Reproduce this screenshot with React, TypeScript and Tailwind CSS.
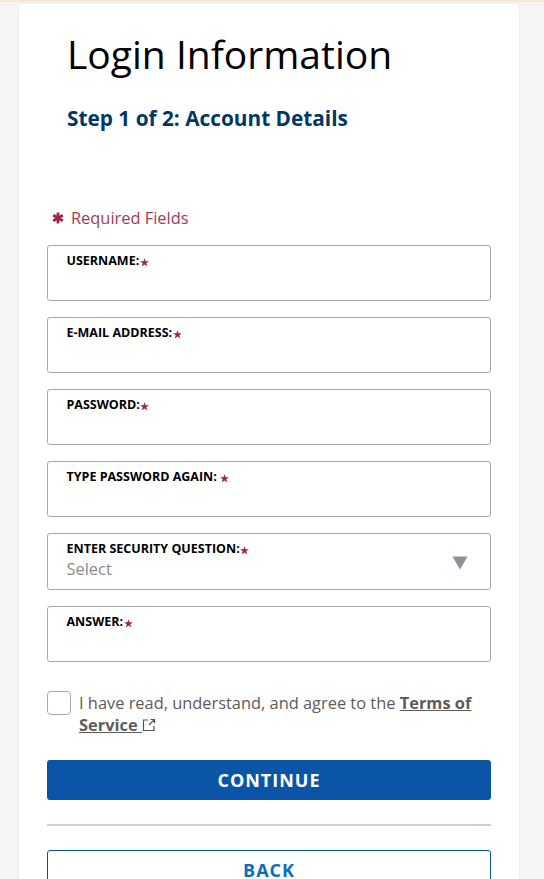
import React from "react";

const Star = ({ className = "" }: { className?: string }) => (
    <svg viewBox="0 0 10 10" className={`inline-block w-[9px] h-[9px] ${className}`}>
        <path d="M5 0.3 L6.2 3.6 L9.8 3.6 L7 5.8 L8 9.4 L5 7.3 L2 9.4 L3 5.8 L0.2 3.6 L3.8 3.6 Z" fill="#a3244a" />
    </svg>
);

const Field = ({ label, gap = false }: { label: string; gap?: boolean }) => (
    <div className="h-14 border border-[#a9a9a9] rounded-[3px] bg-white pl-[18.5px] pt-[7px]">
        <div className="flex items-center text-[12.5px] leading-[16px] font-bold text-black">
            <span>{label}</span>
            <Star className={gap ? "ml-[3px] mt-[3px]" : "ml-[0.5px] mt-[3px]"} />
        </div>
    </div>
);

const App: React.FC = () => {
    return (
        <div className="h-[879px] overflow-hidden bg-[#f5f5f5] font-['Open_Sans',sans-serif]">
            <div className="h-[2px] bg-[#f9e8d4]" />
            <div className="ml-[18px] mt-px w-[502px] h-[900px] bg-white rounded-t-[5px] border border-[#efefef] border-b-0 px-7">
                <h1 className="ml-[20px] pt-[25px] text-[39px] leading-[50px] text-black">Login Information</h1>
                <h2 className="ml-[20px] mt-[25px] text-[20.8px] leading-[28px] font-bold text-[#003865]">
                    Step 1 of 2: Account Details
                </h2>

                <div className="mt-[75px] ml-[5px] flex items-center text-[16.4px] leading-[22px] text-[#a33a55]">
                    <svg viewBox="0 0 12 12" className="w-3 h-3 mr-[7px]">
                        <path d="M6 0.5 V11.5 M1.2 3.2 L10.8 8.8 M10.8 3.2 L1.2 8.8" stroke="#a3244a" strokeWidth="2.8" />
                    </svg>
                    Required Fields
                </div>

                <div className="mt-[16px] flex flex-col gap-4">
                    <Field label="USERNAME:" />
                    <Field label="E-MAIL ADDRESS:" />
                    <Field label="PASSWORD:" />
                    <Field label="TYPE PASSWORD AGAIN:" gap />
                    <div className="h-[57px] border border-[#a9a9a9] rounded-[3px] bg-white pl-[18.5px] pr-[22px] pt-[7px] flex justify-between">
                        <div>
                            <div className="flex items-center text-[12.5px] leading-[16px] font-bold text-black">
                                <span>ENTER SECURITY QUESTION:</span>
                                <Star className="ml-[0.5px] mt-[3px]" />
                            </div>
                            <div className="mt-px text-[16.4px] leading-[22px] text-[#8a8a8a]">Select</div>
                        </div>
                        <svg viewBox="0 0 16 14" className="w-4 h-[14px] mt-[15px]">
                            <path d="M0.5 0.5 H15.5 L8 13.5 Z" fill="#8c8f9c" />
                        </svg>
                    </div>
                    <Field label="ANSWER:" />
                </div>

                <div className="mt-[29px] flex items-start">
                    <div className="w-6 h-6 shrink-0 border border-[#a9a9a9] rounded-[4px] bg-white" />
                    <p className="ml-2 mt-px text-[16.4px] leading-[22px] text-[#5c5c5c]">
                        I have read, understand, and agree to the{" "}
                        <a className="font-bold underline">Terms of</a>{" "}
                        <a className="font-bold underline">Service&nbsp;</a>
                        <svg viewBox="0 0 14 14" fill="none" stroke="#555555" strokeWidth="1.2" className="inline-block w-[14px] h-[14px] align-[-1px]">
                            <path d="M6 2 H1.5 V12.5 H12 V8 M8.5 1.5 H12.5 V5.5 M12.5 1.5 L7 7" />
                        </svg>
                    </p>
                </div>

                <button className="mt-[24px] w-full h-10 rounded-[3px] bg-[#0a55a7] text-white text-[18px] font-bold tracking-[1px]">
                    CONTINUE
                </button>

                <div className="mt-[24px] h-[2px] bg-[#c9d3da]" />

                <button className="mt-[24px] w-full h-10 rounded-[3px] border border-[#005a8c] bg-white text-[#0a6ebd] text-[18px] font-bold tracking-[1px]">
                    BACK
                </button>
            </div>
        </div>
    );
};

export default App;
